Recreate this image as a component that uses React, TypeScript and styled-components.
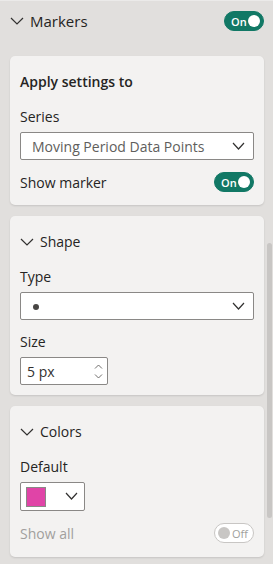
import React from 'react';
import styled, { createGlobalStyle } from 'styled-components';

const GlobalStyle = createGlobalStyle`
  html, body {
    margin: 0;
    padding: 0;
    background: #e1dfdd;
  }
  body {
    font-family: 'Open Sans', 'Noto Sans', sans-serif;
    color: #252423;
  }
`;

const Pane = styled.div`
  width: 273px;
  height: 564px;
  display: flex;
  overflow: hidden;
  background: #e1dfdd;
  border-top: 1px solid #ebeae9;
  box-sizing: border-box;
`;

const Content = styled.div`
  width: 254px;
  margin-left: 10px;
  display: flex;
  flex-direction: column;
`;

const ScrollTrack = styled.div`
  flex: 1;
  display: flex;
  justify-content: center;
  padding-left: 2px;
`;

const Thumb = styled.div`
  width: 5px;
  height: 275px;
  margin-top: 242px;
  border-radius: 3px;
  background: #c8c6c4;
`;

const Header = styled.div`
  height: 20px;
  margin-top: 10px;
  margin-bottom: 25px;
  display: flex;
  align-items: center;
  justify-content: space-between;
`;

const HeaderTitle = styled.div<{ $size?: number }>`
  display: flex;
  align-items: center;
  gap: 6px;
  font-size: ${(p) => p.$size || 15}px;
  line-height: 20px;
  color: #252423;
`;

const Card = styled.div<{ $bottom: number }>`
  background: #f3f2f1;
  border-radius: 5px;
  box-shadow: 0 1px 2px rgba(0, 0, 0, 0.12);
  padding: 16px 10px ${(p) => p.$bottom}px 10px;
  margin-bottom: 11px;
  display: flex;
  flex-direction: column;
`;

const CardTitle = styled.div`
  font-size: 14px;
  font-weight: 600;
  line-height: 20px;
  color: #252423;
  margin-bottom: 15px;
`;

const SectionHeader = styled(HeaderTitle)`
  margin-bottom: 15px;
`;

const Label = styled.div`
  font-size: 14px;
  line-height: 20px;
  color: #252423;
  margin-bottom: 5px;
`;

const Select = styled.div`
  height: 28px;
  box-sizing: border-box;
  background: #ffffff;
  border: 1px solid #8a8886;
  border-radius: 2px;
  display: flex;
  align-items: center;
  justify-content: space-between;
  padding: 0 8px 0 11px;
  font-size: 14px;
  color: #605e5c;
  margin-bottom: 12px;
`;

const Dot = styled.span`
  width: 6px;
  height: 6px;
  border-radius: 50%;
  background: #484644;
  margin-left: 1px;
  margin-top: 2px;
`;

const Spin = styled.div`
  width: 88px;
  height: 28px;
  box-sizing: border-box;
  background: #ffffff;
  border: 1px solid #8a8886;
  border-radius: 2px;
  display: flex;
  align-items: center;
  justify-content: space-between;
  padding: 0 4px 0 6px;
  font-size: 14px;
  color: #323130;
`;

const SpinArrows = styled.div`
  display: flex;
  flex-direction: column;
  gap: 5px;
`;

const ColorPicker = styled.div`
  width: 65px;
  height: 29px;
  box-sizing: border-box;
  background: #ffffff;
  border: 1px solid #8a8886;
  border-radius: 2px;
  display: flex;
  align-items: center;
  justify-content: space-between;
  padding: 0 6px 0 5px;
  margin-bottom: 12px;
`;

const Swatch = styled.div<{ $color: string }>`
  width: 20px;
  height: 20px;
  box-sizing: border-box;
  background: ${(p) => p.$color};
  border: 1px solid #8a8886;
`;

const Row = styled.div<{ $muted?: boolean }>`
  height: 20px;
  display: flex;
  align-items: center;
  justify-content: space-between;
  font-size: 14px;
  color: ${(p) => (p.$muted ? '#a19f9d' : '#252423')};
`;

const Toggle = styled.div<{ $on: boolean }>`
  width: 40px;
  height: 20px;
  box-sizing: border-box;
  border-radius: 10px;
  display: flex;
  align-items: center;
  flex-direction: ${(p) => (p.$on ? 'row' : 'row-reverse')};
  justify-content: space-between;
  padding: ${(p) => (p.$on ? '0 3px 0 6px' : '0 5px 0 3px')};
  background: ${(p) => (p.$on ? '#117865' : '#ffffff')};
  border: 1px solid ${(p) => (p.$on ? '#117865' : '#c8c6c4')};
  font-size: 11px;
  line-height: 1;
  font-weight: ${(p) => (p.$on ? 600 : 400)};
  color: ${(p) => (p.$on ? '#ffffff' : '#a19f9d')};
`;

const Knob = styled.span<{ $on: boolean }>`
  width: 12px;
  height: 12px;
  border-radius: 50%;
  background: ${(p) => (p.$on ? '#ffffff' : '#c8c6c4')};
`;

const Chevron = ({ w = 13, h = 7, color = '#323130' }: { w?: number; h?: number; color?: string }) => (
  <svg width={w} height={h + 2} viewBox={`0 0 ${w} ${h + 2}`} fill="none">
    <polyline points={`1,1 ${w / 2},${h} ${w - 1},1`} stroke={color} strokeWidth="1.2" />
  </svg>
);

const Caret = ({ up }: { up?: boolean }) => (
  <svg width="9" height="5" viewBox="0 0 9 5" fill="none">
    <polyline points={up ? '1,4.5 4.5,1 8,4.5' : '1,0.5 4.5,4 8,0.5'} stroke="#605e5c" strokeWidth="0.9" />
  </svg>
);

const Switch = ({ on }: { on: boolean }) => (
  <Toggle $on={on}>
    <span>{on ? 'On' : 'Off'}</span>
    <Knob $on={on} />
  </Toggle>
);

const App = () => {
  return (
    <>
      <GlobalStyle />
      <Pane>
        <Content>
          <Header>
            <HeaderTitle $size={15}>
              <Chevron w={14} h={7} />
              Markers
            </HeaderTitle>
            <Switch on />
          </Header>

          <Card $bottom={13}>
            <CardTitle>Apply settings to</CardTitle>
            <Label>Series</Label>
            <Select>
              <span>Moving Period Data Points</span>
              <Chevron />
            </Select>
            <Row>
              <span>Show marker</span>
              <Switch on />
            </Row>
          </Card>

          <Card $bottom={10}>
            <SectionHeader $size={14}>
              <Chevron w={14} h={7} />
              Shape
            </SectionHeader>
            <Label>Type</Label>
            <Select>
              <Dot />
              <Chevron />
            </Select>
            <Label>Size</Label>
            <Spin>
              <span>5 px</span>
              <SpinArrows>
                <Caret up />
                <Caret />
              </SpinArrows>
            </Spin>
          </Card>

          <Card $bottom={14}>
            <SectionHeader $size={14}>
              <Chevron w={14} h={7} />
              Colors
            </SectionHeader>
            <Label>Default</Label>
            <ColorPicker>
              <Swatch $color="#e044a7" />
              <Chevron />
            </ColorPicker>
            <Row $muted>
              <span>Show all</span>
              <Switch on={false} />
            </Row>
          </Card>
        </Content>
        <ScrollTrack>
          <Thumb />
        </ScrollTrack>
      </Pane>
    </>
  );
};

export default App;
